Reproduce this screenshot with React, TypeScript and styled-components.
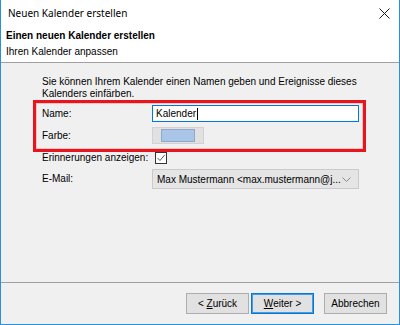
import React from "react";
import styled, { createGlobalStyle } from "styled-components";

const Global = createGlobalStyle`
  html, body { margin: 0; padding: 0; background: #ffffff; }
  body { font-family: "Liberation Sans", Arial, sans-serif; font-size: 10px; color: #000; }
  * { box-sizing: border-box; }
`;

const Window = styled.div`
  width: 400px;
  height: 325px;
  display: flex;
  flex-direction: column;
  border: 1px solid #2b8fe0;
  border-top: none;
  background: #ffffff;
  overflow: hidden;
`;

const TitleBar = styled.div`
  height: 27px;
  display: flex;
  align-items: center;
  justify-content: space-between;
  padding: 0 9px 0 7px;
  font-family: "Noto Sans", "Open Sans", sans-serif;
  font-size: 10px;
  line-height: 27px;
`;

const CloseIcon = () => (
  <svg width="11" height="11" viewBox="0 0 11 11">
    <path d="M0.5 0.5 L10.5 10.5 M10.5 0.5 L0.5 10.5" stroke="#1a1a1a" strokeWidth="1" />
  </svg>
);

const Header = styled.div`
  padding: 1px 5px 2px 5px;
  border-bottom: 1px solid #a0a0a0;
`;

const HeaderTitle = styled.div`
  font-weight: 700;
  line-height: 16px;
`;

const HeaderSub = styled.div`
  line-height: 16px;
`;

const Body = styled.div`
  flex: 1;
  background: #f0f0f0;
  padding: 13px 0 0 41px;
  display: flex;
  flex-direction: column;
`;

const Intro = styled.p`
  margin: 0;
  line-height: 12px;
  width: 330px;
`;

const Highlight = styled.div`
  margin-left: -9px;
  width: 333px;
  border: 3px solid #e8141e;
  box-shadow: inset 0 0 0 1px #f4c4c6;
  padding: 2px 4px 5px 6px;
  display: flex;
  flex-direction: column;
  gap: 5px;
`;

const Row = styled.div<{ $h: number; $mt?: number }>`
  display: grid;
  grid-template-columns: 110px 1fr;
  align-items: center;
  height: ${(p) => p.$h}px;
  margin-top: ${(p) => p.$mt ?? 0}px;
`;

const Label = styled.span`
  line-height: 12px;
  white-space: nowrap;
`;

const TextInput = styled.div`
  width: 207px;
  height: 17px;
  background: #ffffff;
  border: 1px solid #0078d7;
  display: flex;
  align-items: center;
  padding-left: 3px;
`;

const Caret = styled.span`
  display: inline-block;
  width: 1px;
  height: 12px;
  background: #000;
  margin-left: 1px;
`;

const ColorButton = styled.div`
  width: 52px;
  height: 17px;
  background: #e1e1e1;
  border: 1px solid #d2d2d2;
  display: flex;
  align-items: center;
  justify-content: center;
`;

const Swatch = styled.div<{ $color: string }>`
  width: 34px;
  height: 13px;
  background: ${(p) => p.$color};
  border: 1px solid #8fa9cc;
`;

const CheckBox = styled.div`
  width: 12px;
  height: 12px;
  margin-left: 3px;
  border: 1px solid #333333;
  background: #ffffff;
  display: flex;
  align-items: center;
  justify-content: center;
`;

const Select = styled.div`
  width: 207px;
  height: 20px;
  background: #e5e5e5;
  border: 1px solid #cacaca;
  display: flex;
  align-items: center;
  justify-content: space-between;
  padding: 0 7px 0 4px;
  white-space: nowrap;
`;

const Footer = styled.div`
  height: 42px;
  border-top: 1px solid #a0a0a0;
  background: #f0f0f0;
  display: flex;
  justify-content: flex-end;
  align-items: flex-start;
  padding: 10px 12px 0 0;
`;

const Button = styled.div<{ $default?: boolean; $ml?: number }>`
  width: 63px;
  height: 21px;
  margin-left: ${(p) => p.$ml ?? 0}px;
  background: #e1e1e1;
  border: 1px solid ${(p) => (p.$default ? "#0078d7" : "#adadad")};
  box-shadow: ${(p) => (p.$default ? "inset 0 0 0 1px #4a9ae0" : "none")};
  display: flex;
  align-items: center;
  justify-content: center;
  line-height: 12px;
`;

const U = styled.span`
  text-decoration: underline;
`;

export default function App() {
  return (
    <>
      <Global />
      <Window>
        <TitleBar>
          <span>Neuen Kalender erstellen</span>
          <CloseIcon />
        </TitleBar>
        <Header>
          <HeaderTitle>Einen neuen Kalender erstellen</HeaderTitle>
          <HeaderSub>Ihren Kalender anpassen</HeaderSub>
        </Header>
        <Body>
          <Intro>
            Sie können Ihrem Kalender einen Namen geben und Ereignisse dieses Kalenders einfärben.
          </Intro>
          <Highlight>
            <Row $h={17}>
              <Label>Name:</Label>
              <TextInput>
                Kalender
                <Caret />
              </TextInput>
            </Row>
            <Row $h={17}>
              <Label>Farbe:</Label>
              <ColorButton>
                <Swatch $color="#a9c5e7" />
              </ColorButton>
            </Row>
          </Highlight>
          <Row $h={12}>
            <Label>Erinnerungen anzeigen:</Label>
            <CheckBox>
              <svg width="10" height="10" viewBox="0 0 10 10">
                <path d="M1.5 5 L4 7.5 L8.8 1.8" fill="none" stroke="#555" strokeWidth="1" />
              </svg>
            </CheckBox>
          </Row>
          <Row $h={20} $mt={5}>
            <Label>E-Mail:</Label>
            <Select>
              <span>Max Mustermann &lt;max.mustermann@j...</span>
              <svg width="9" height="5" viewBox="0 0 9 5">
                <path d="M0.5 0.5 L4.5 4.5 L8.5 0.5" fill="none" stroke="#888" strokeWidth="1" />
              </svg>
            </Select>
          </Row>
        </Body>
        <Footer>
          <Button>
            &lt;&nbsp;<U>Z</U>urück
          </Button>
          <Button $default $ml={2}>
            <U>W</U>eiter &gt;
          </Button>
          <Button $ml={10}>Abbrechen</Button>
        </Footer>
      </Window>
    </>
  );
}
